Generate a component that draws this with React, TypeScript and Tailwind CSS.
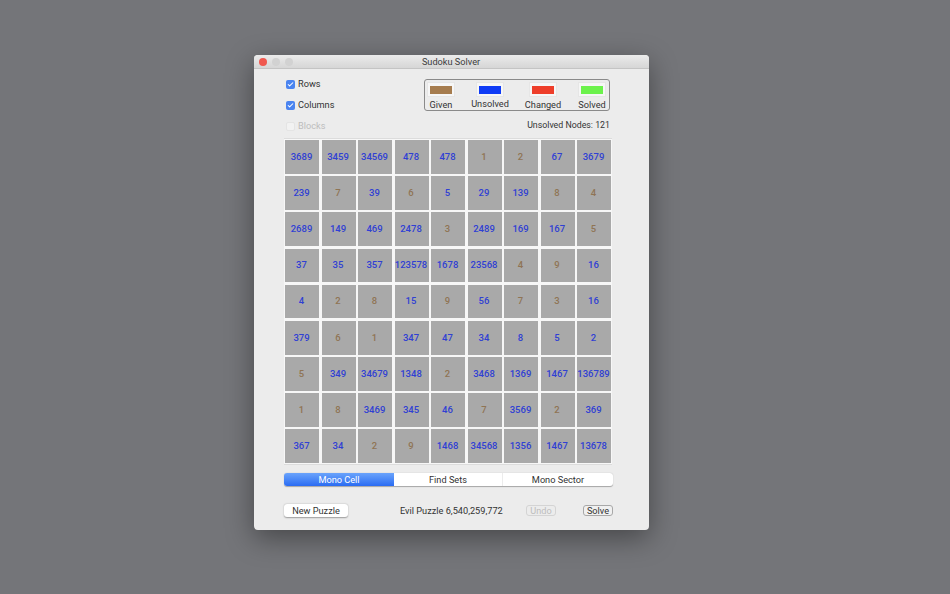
import React from "react";
import { Check } from "lucide-react";

const font = "font-['Roboto','Liberation_Sans',sans-serif]";

const board: string[][] = [
  ["3689", "3459", "34569", "478", "478", "1", "2", "67", "3679"],
  ["239", "7", "39", "6", "5", "29", "139", "8", "4"],
  ["2689", "149", "469", "2478", "3", "2489", "169", "167", "5"],
  ["37", "35", "357", "123578", "1678", "23568", "4", "9", "16"],
  ["4", "2", "8", "15", "9", "56", "7", "3", "16"],
  ["379", "6", "1", "347", "47", "34", "8", "5", "2"],
  ["5", "349", "34679", "1348", "2", "3468", "1369", "1467", "136789"],
  ["1", "8", "3469", "345", "46", "7", "3569", "2", "369"],
  ["367", "34", "2", "9", "1468", "34568", "1356", "1467", "13678"],
];

// single digits are the given cells, except the ones the solver filled in
const solvedSingles = new Set(["4,0", "5,6", "5,7", "5,8", "1,4"]);

const CheckRow = ({ label, checked, disabled }: { label: string; checked?: boolean; disabled?: boolean }) => (
  <div className="flex items-center gap-[3px] h-[21px] ml-[1px] -mt-[0.5px] mb-[0.5px]">
    <div
      className={
        checked
          ? "w-[9px] h-[9px] rounded-[2px] bg-[#4a84f0] flex items-center justify-center"
          : "w-[9px] h-[9px] rounded-[2px] bg-[#f2f2f2] border border-[#e4e4e4]"
      }
    >
      {checked && <Check className="w-[7px] h-[7px] text-white" strokeWidth={3.5} />}
    </div>
    <span className={disabled ? "-mt-[1px] text-[#bdbdbd]" : "-mt-[1px] text-[#333333]"}>{label}</span>
  </div>
);

const Legend = ({ label, color, up }: { label: string; color: string; up?: boolean }) => (
  <div className="w-[28px] flex flex-col items-center">
    <div className="w-[28px] h-[15px] bg-[#f6f6f6] border border-[#e6e6e6] flex items-center justify-center">
      <div className={`w-[22px] h-[8px] ${color}`} />
    </div>
    <span className={up ? "mt-[1px] leading-[12px] whitespace-nowrap text-[#333333]" : "mt-[2px] leading-[12px] whitespace-nowrap text-[#333333]"}>{label}</span>
  </div>
);

export default function App() {
  return (
    <div className={`${font} w-[950px] h-[594px] bg-[#747579] pt-[55px] pl-[254px] overflow-hidden text-[9.2px]`}>
      <div className="w-[395px] h-[475px] bg-[#ececec] rounded-[4px] shadow-[0_8px_28px_rgba(0,0,0,0.4)] flex flex-col">
        {/* Title bar */}
        <div className="relative h-[14px] shrink-0 rounded-t-[4px] bg-gradient-to-b from-[#ebebeb] to-[#d6d6d6] border-b border-[#c4c4c4] flex items-center justify-center">
          <div className="absolute left-[5px] top-[3px] flex gap-[5px]">
            <div className="w-[8px] h-[8px] rounded-full bg-[#f0584f]" />
            <div className="w-[8px] h-[8px] rounded-full bg-[#d2d2d2]" />
            <div className="w-[8px] h-[8px] rounded-full bg-[#d2d2d2]" />
          </div>
          <span className="-ml-[1px] text-[#3c3c3c] leading-none">Sudoku Solver</span>
        </div>

        {/* Options and legend */}
        <div className="flex justify-between pl-[31px] pr-[39px] pt-[5px] h-[69px] shrink-0">
          <div className="flex flex-col">
            <CheckRow label="Rows" checked />
            <CheckRow label="Columns" checked />
            <CheckRow label="Blocks" disabled />
          </div>
          <div className="flex flex-col items-end pt-[5px]">
            <div className="w-[186px] h-[32px] border border-[#8a8a8a] rounded-[3px] flex items-start pt-[2px] pl-[2px] gap-[21px]">
              <Legend label="Given" color="bg-[#a67c4e]" />
              <Legend label="Unsolved" color="bg-[#0f3bf5]" up />
              <div className="ml-[4px]">
                <Legend label="Changed" color="bg-[#ee3e2a]" />
              </div>
              <Legend label="Solved" color="bg-[#6cf24c]" />
            </div>
            <span className="mt-[8px] leading-[12px] text-[8.8px] text-[#333333]">Unsolved Nodes: 121</span>
          </div>
        </div>

        {/* Board */}
        <div className="ml-[30px] w-[328px] h-[327px] bg-[#f7f7f7] border-t border-b border-[#dcdcdc] grid grid-cols-9 grid-rows-9 gap-[2.5px] p-[1px] text-[9.5px]">
          {board.flatMap((row, r) =>
            row.map((value, c) => {
              const given = value.length === 1 && !solvedSingles.has(`${r},${c}`);
              return (
                <div
                  key={`${r}-${c}`}
                  className={`bg-[#a9a9a9] pr-[1px] flex items-center justify-center font-medium ${given ? "text-[#8f7454]" : "text-[#2f40d4]"}`}
                >
                  {value}
                </div>
              );
            })
          )}
        </div>

        {/* Mode tabs */}
        <div className="ml-[30px] mt-[8px] w-[329px] h-[13px] flex rounded-[3px] bg-white shadow-[0_0.5px_1px_rgba(0,0,0,0.3)] overflow-hidden text-[#333333]">
          <div className="w-[110px] pt-[1px] bg-gradient-to-b from-[#6aa3fb] to-[#2a6bf2] text-white flex items-center justify-center">Mono Cell</div>
          <div className="w-[109px] pt-[1px] border-r border-[#ececec] flex items-center justify-center">Find Sets</div>
          <div className="flex-1 pt-[1px] flex items-center justify-center">Mono Sector</div>
        </div>

        {/* Bottom bar */}
        <div className="ml-[30px] mt-[18px] w-[329px] h-[13px] flex items-center text-[#333333]">
          <div className="w-[64px] h-[13px] bg-white rounded-[3px] shadow-[0_0.5px_1.5px_rgba(0,0,0,0.35)] flex items-center justify-center">New Puzzle</div>
          <span className="ml-[52px]">Evil Puzzle 6,540,259,772</span>
          <div className="ml-auto mr-[27px] w-[30px] h-[11px] rounded-[3px] border border-[#d4d4d4] text-[#bdbdbd] flex items-center justify-center">Undo</div>
          <div className="w-[30px] h-[11px] rounded-[3px] bg-[#f0f0f0] border border-[#a8a8a8] flex items-center justify-center">Solve</div>
        </div>
      </div>
    </div>
  );
}
